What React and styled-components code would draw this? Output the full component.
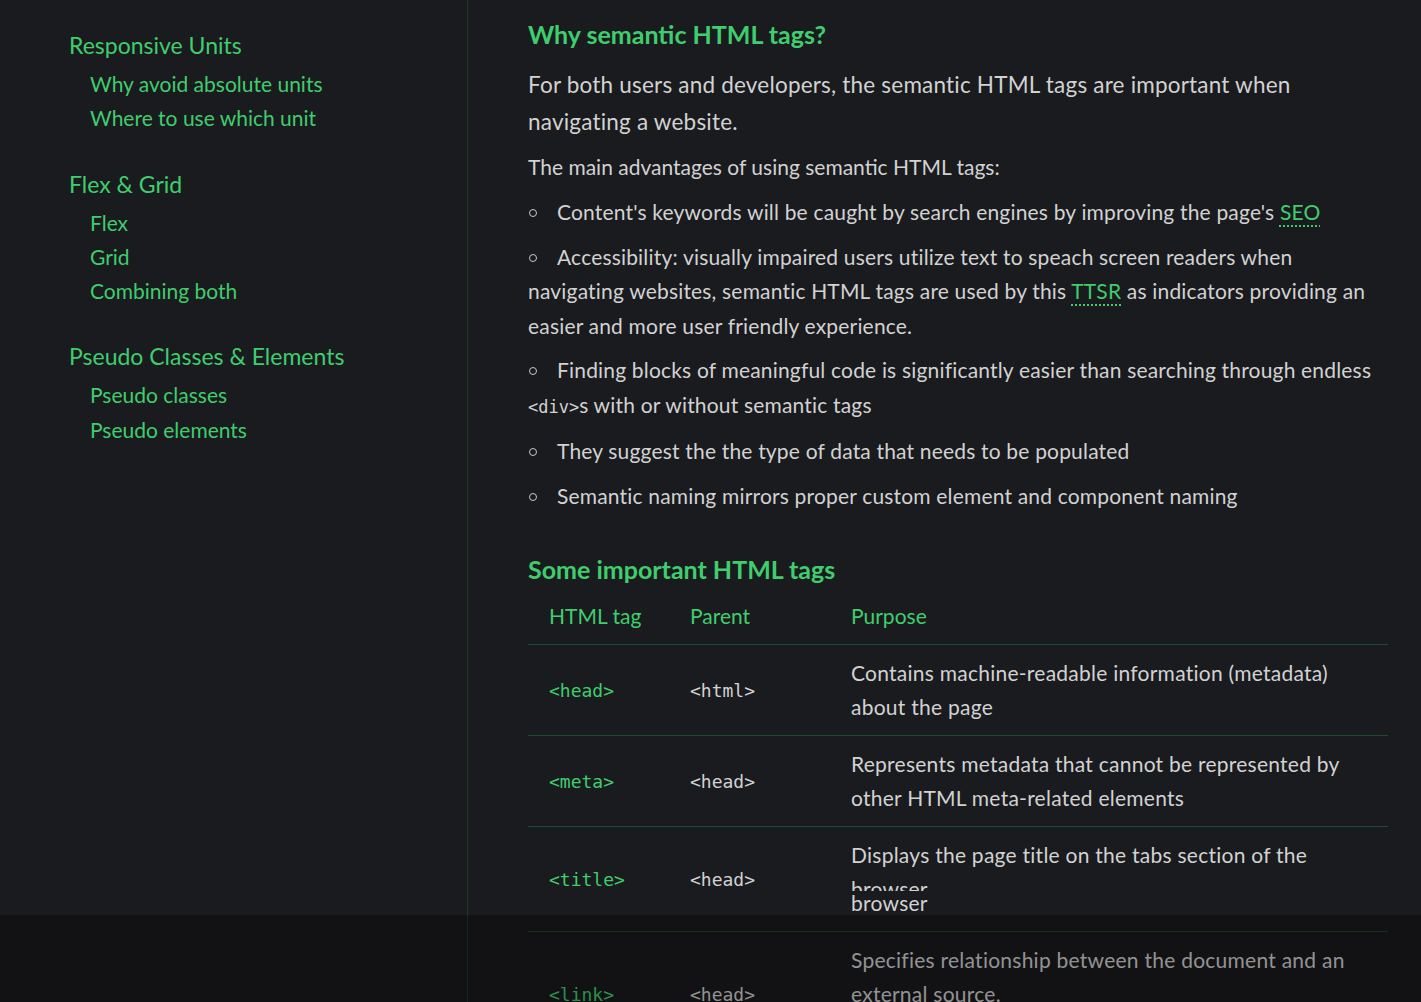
import React from "react";
import styled, { createGlobalStyle } from "styled-components";

const GlobalStyle = createGlobalStyle`
  html, body { margin: 0; padding: 0; background: #1a1b1e; overflow: hidden; }
  body { font-family: Lato, "Open Sans", sans-serif; color: #d2d2d2; }
`;

const GREEN = "#3fcd6e";
const LINE = "#1e4b2b";

const Layout = styled.div`
  display: flex;
  height: 100vh;
  overflow: hidden;
  position: relative;
`;

const Sidebar = styled.nav`
  width: 468px;
  flex-shrink: 0;
  border-right: 1px solid #1b3d26;
  box-sizing: border-box;
  padding: 30px 0 0 69px;
  display: flex;
  flex-direction: column;
  gap: 33px;
`;

const NavGroup = styled.div`
  display: flex;
  flex-direction: column;
`;

const NavTitle = styled.a`
  font-size: 23px;
  line-height: 30px;
  color: ${GREEN};
  margin-bottom: 7px;
`;

const NavItem = styled.a`
  font-size: 21px;
  line-height: 34.3px;
  color: ${GREEN};
  padding-left: 21px;
`;

const Main = styled.main`
  padding: 20px 0 0 60px;
  width: 860px;
`;

const Heading = styled.h2`
  margin: 0;
  font-size: 25px;
  line-height: 29px;
  font-weight: 700;
  color: ${GREEN};
  margin-top: ${(p) => p.$top || 0}px;
`;

const Para = styled.p`
  margin: ${(p) => p.$top}px 0 0;
  font-size: ${(p) => p.$size}px;
  line-height: ${(p) => p.$lh}px;
  letter-spacing: ${(p) => p.$ls || 0}px;
`;

const List = styled.ul`
  list-style: none;
  margin: 11px 0 0;
  padding: 0;
`;

const Item = styled.li`
  font-size: 21px;
  line-height: 34.5px;
  letter-spacing: 0.18px;
  margin-bottom: 10px;
  &::before {
    content: "";
    display: inline-block;
    width: 6px;
    height: 6px;
    border: 1.3px solid #c8c8c8;
    border-radius: 50%;
    margin: 0 20px 0 1px;
    vertical-align: 3px;
  }
`;

const Abbr = styled.abbr`
  color: ${GREEN};
  text-decoration: underline dotted ${GREEN};
  text-decoration-thickness: 2px;
  text-underline-offset: 5px;
`;

const Code = styled.code`
  font-family: "DejaVu Sans Mono", "Liberation Mono", monospace;
  font-size: ${(p) => p.$size || 18}px;
  letter-spacing: 0;
  color: ${(p) => (p.$green ? GREEN : "#d2d2d2")};
`;

const Table = styled.table`
  margin-top: 4px;
  width: 860px;
  border-collapse: collapse;
  table-layout: fixed;
`;

const Th = styled.th`
  text-align: left;
  font-weight: 400;
  font-size: 21px;
  line-height: 28px;
  color: ${GREEN};
  padding: 14px 21px;
  border-bottom: 1px solid ${LINE};
`;

const Tr = styled.tr`
  border-bottom: 1px solid ${LINE};
`;

const Td = styled.td`
  font-size: 21px;
  line-height: 34px;
  letter-spacing: 0.25px;
  padding: 11px 21px;
  vertical-align: middle;
`;

const Clipped = styled.span`
  display: block;
  height: 19px;
  overflow: hidden;
  margin-bottom: -5px;
`;

const Shade = styled.div`
  position: absolute;
  left: 0;
  right: 0;
  top: 915px;
  bottom: 0;
  background: rgba(0, 0, 0, 0.3);
  pointer-events: none;
`;

const nav = [
  { title: "Responsive Units", items: ["Why avoid absolute units", "Where to use which unit"] },
  { title: "Flex & Grid", items: ["Flex", "Grid", "Combining both"] },
  { title: "Pseudo Classes & Elements", items: ["Pseudo classes", "Pseudo elements"] },
];

export default function App() {
  return (
    <>
      <GlobalStyle />
      <Layout>
        <Sidebar>
          {nav.map((g) => (
            <NavGroup key={g.title}>
              <NavTitle>{g.title}</NavTitle>
              {g.items.map((i) => (
                <NavItem key={i}>{i}</NavItem>
              ))}
            </NavGroup>
          ))}
        </Sidebar>
        <Main>
          <Heading>Why semantic HTML tags?</Heading>
          <Para $top={17} $size={22.5} $lh={37} $ls={0.2}>
            For both users and developers, the semantic HTML tags are important when navigating a website.
          </Para>
          <Para $top={10} $size={21} $lh={34}>
            The main advantages of using semantic HTML tags:
          </Para>
          <List>
            <Item>
              Content's keywords will be caught by search engines by improving the page's <Abbr>SEO</Abbr>
            </Item>
            <Item>
              Accessibility: visually impaired users utilize text to speach screen readers when navigating websites,
              semantic HTML tags are used by this <Abbr>TTSR</Abbr> as indicators providing an easier and more user
              friendly experience.
            </Item>
            <Item>
              Finding blocks of meaningful code is significantly easier than searching through endless{" "}
              <Code $size={17}>&lt;div&gt;</Code>s with or without semantic tags
            </Item>
            <Item>They suggest the the type of data that needs to be populated</Item>
            <Item>Semantic naming mirrors proper custom element and component naming</Item>
          </List>
          <Heading $top={42}>Some important HTML tags</Heading>
          <Table>
            <colgroup>
              <col style={{ width: "141px" }} />
              <col style={{ width: "161px" }} />
              <col />
            </colgroup>
            <thead>
              <tr>
                <Th>HTML tag</Th>
                <Th>Parent</Th>
                <Th>Purpose</Th>
              </tr>
            </thead>
            <tbody>
              <Tr>
                <Td><Code $green>&lt;head&gt;</Code></Td>
                <Td><Code>&lt;html&gt;</Code></Td>
                <Td>Contains machine-readable information (metadata) about the page</Td>
              </Tr>
              <Tr>
                <Td><Code $green>&lt;meta&gt;</Code></Td>
                <Td><Code>&lt;head&gt;</Code></Td>
                <Td>Represents metadata that cannot be represented by other HTML meta-related elements</Td>
              </Tr>
              <Tr>
                <Td><Code $green>&lt;title&gt;</Code></Td>
                <Td><Code>&lt;head&gt;</Code></Td>
                <Td>
                  Displays the page title on the tabs section of the
                  <Clipped>browser</Clipped>
                  browser
                </Td>
              </Tr>
              <Tr>
                <Td><Code $green>&lt;link&gt;</Code></Td>
                <Td><Code>&lt;head&gt;</Code></Td>
                <Td>
                  Specifies relationship between the document and an external source.
                  <br />
                  Commonly used to link stylesheets.
                </Td>
              </Tr>
            </tbody>
          </Table>
        </Main>
        <Shade />
      </Layout>
    </>
  );
}
